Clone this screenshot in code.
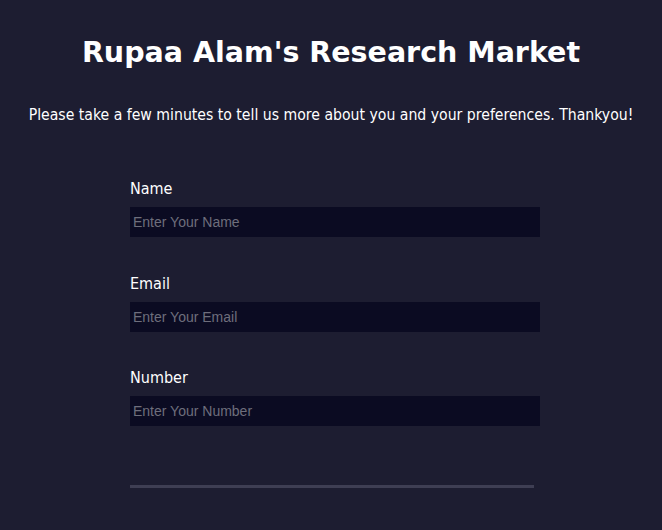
import React from 'react';

const fields = [
  { label: 'Name', placeholder: 'Enter Your Name', type: 'text' },
  { label: 'Email', placeholder: 'Enter Your Email', type: 'email' },
  { label: 'Number', placeholder: 'Enter Your Number', type: 'text' },
];

export default function App() {
  return (
    <div className="min-h-[530px] bg-[#1d1d31] text-white" style={{ fontFamily: 'Tahoma, "DejaVu Sans", sans-serif' }}>
      <h1 className="pt-[35px] text-center text-[28.5px] font-bold leading-[36px] font-['DejaVu_Sans',sans-serif]">
        Rupaa Alam's Research Market
      </h1>
      <p className="mt-[34px] text-center text-[15.65px] leading-[20px] font-['DejaVu_Sans_Condensed',sans-serif]">
        Please take a few minutes to tell us more about you and your preferences. Thankyou!
      </p>

      <form className="ml-[130px] mt-[54px] w-[410px]">
        {fields.map((f) => (
          <div key={f.label} className="mb-[36.5px]">
            <label className="block text-[16px] leading-[20px] font-['DejaVu_Sans_Condensed',sans-serif]">{f.label}</label>
            <input
              type={f.type}
              placeholder={f.placeholder}
              className="mt-[8px] block h-[30px] w-full bg-[#0b0b22] px-[3px] text-[14px] text-white outline-none placeholder:text-[#6e6e7c] font-['Liberation_Sans',sans-serif]"
            />
          </div>
        ))}
        <div className="mt-[59px] h-[3px] w-[404px] bg-[#3e3e53]" />
      </form>
    </div>
  );
}
